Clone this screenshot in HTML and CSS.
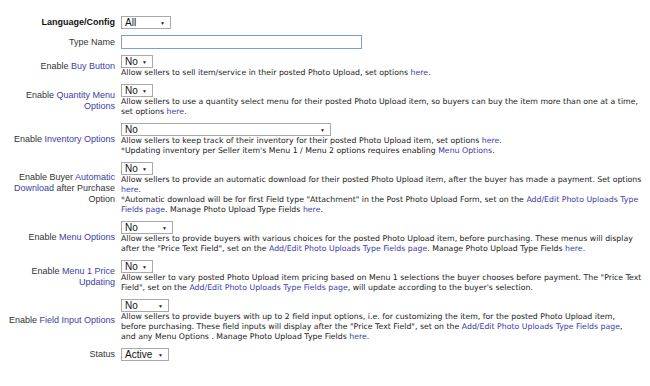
FILE: index.html
```html
<!DOCTYPE html>
<html>
<head>
<meta charset="utf-8">
<link rel="stylesheet" href="styles.css">
</head>
<body>
<table class="form">
  <tr>
    <td class="lbl bold">Language/Config</td>
    <td class="ctl"><div class="sel w50"><span>All</span><i>▼</i></div></td>
  </tr>
  <tr>
    <td class="lbl">Type Name</td>
    <td class="ctl"><div class="txt"></div></td>
  </tr>
  <tr>
    <td class="lbl">Enable <a>Buy Button</a></td>
    <td class="ctl"><div class="sel w32"><span>No</span><i>▼</i></div>
      <div class="desc">Allow sellers to sell item/service in their posted Photo Upload, set options <a>here</a>.</div></td>
  </tr>
  <tr>
    <td class="lbl">Enable <a>Quantity Menu<br>Options</a></td>
    <td class="ctl"><div class="sel w32"><span>No</span><i>▼</i></div>
      <div class="desc">Allow sellers to use a quantity select menu for their posted Photo Upload item, so buyers can buy the item more than one at a time,<br>set options <a>here</a>.</div></td>
  </tr>
  <tr>
    <td class="lbl">Enable <a>Inventory Options</a></td>
    <td class="ctl"><div class="sel w210"><span>No</span><i>▼</i></div>
      <div class="desc">Allow sellers to keep track of their inventory for their posted Photo Upload item, set options <a>here</a>.<br>*Updating inventory per Seller item's Menu 1 / Menu 2 options requires enabling <a>Menu Options</a>.</div></td>
  </tr>
  <tr>
    <td class="lbl">Enable Buyer <a>Automatic<br>Download</a> after Purchase<br>Option</td>
    <td class="ctl"><div class="sel w32"><span>No</span><i>▼</i></div>
      <div class="desc">Allow sellers to provide an automatic download for their posted Photo Upload item, after the buyer has made a payment. Set options<br><a>here</a>.<br>*Automatic download will be for first Field type "Attachment" in the Post Photo Upload Form, set on the <a>Add/Edit Photo Uploads Type<br>Fields page</a>. Manage Photo Upload Type Fields <a>here</a>.</div></td>
  </tr>
  <tr>
    <td class="lbl">Enable <a>Menu Options</a></td>
    <td class="ctl"><div class="sel w52"><span>No</span><i>▼</i></div>
      <div class="desc">Allow sellers to provide buyers with various choices for the posted Photo Upload item, before purchasing. These menus will display<br>after the "Price Text Field", set on the <a>Add/Edit Photo Uploads Type Fields page</a>. Manage Photo Upload Type Fields <a>here</a>.</div></td>
  </tr>
  <tr>
    <td class="lbl">Enable <a>Menu 1 Price<br>Updating</a></td>
    <td class="ctl"><div class="sel w32"><span>No</span><i>▼</i></div>
      <div class="desc">Allow seller to vary posted Photo Upload item pricing based on Menu 1 selections the buyer chooses before payment. The "Price Text<br>Field", set on the <a>Add/Edit Photo Uploads Type Fields page</a>, will update according to the buyer's selection.</div></td>
  </tr>
  <tr>
    <td class="lbl">Enable <a>Field Input Options</a></td>
    <td class="ctl"><div class="sel w48"><span>No</span><i>▼</i></div>
      <div class="desc">Allow sellers to provide buyers with up to 2 field input options, i.e. for customizing the item, for the posted Photo Upload item,<br>before purchasing. These field inputs will display after the "Price Text Field", set on the <a>Add/Edit Photo Uploads Type Fields page</a>,<br>and any Menu Options . Manage Photo Upload Type Fields <a>here</a>.</div></td>
  </tr>
  <tr>
    <td class="lbl">Status</td>
    <td class="ctl"><div class="sel w48"><span>Active</span><i>▼</i></div></td>
  </tr>
</table>
</body>
</html>
```
FILE: styles.css
```css
html, body {
  margin: 0;
  padding: 0;
  background: #fff;
}
.form {
  border-collapse: collapse;
  margin: 13px 0 0 0;
}
.form td {
  padding: 3px 0;
}
.lbl {
  width: 115px;
  text-align: right;
  vertical-align: middle;
  font-family: "Liberation Sans", Arial, sans-serif;
  font-size: 9px;
  line-height: 10.7px;
  color: #333;
  white-space: nowrap;
}
.lbl.bold {
  font-weight: bold;
  color: #111;
}
.ctl {
  padding-left: 6px !important;
  vertical-align: top;
}
a {
  color: #3d3da6;
}
.sel {
  box-sizing: border-box;
  height: 13px;
  border: 1px solid #a9a9a9;
  background: #fff;
  display: flex;
  align-items: center;
  justify-content: space-between;
  padding: 0 5px 0 3px;
  font-family: "Liberation Sans", Arial, sans-serif;
  font-size: 10px;
  color: #111;
}
.sel i {
  font-style: normal;
  font-size: 5px;
  color: #222;
}
.w50 { width: 50px; }
.w32 { width: 32px; }
.w52 { width: 52px; }
.w48 { width: 48px; }
.w210 { width: 210px; }
.txt {
  box-sizing: border-box;
  width: 241px;
  height: 14px;
  border: 1px solid #7d9ed8;
  background: #fff;
}
.desc {
  font-family: "DejaVu Sans", Verdana, sans-serif;
  font-size: 7.8px;
  line-height: 10px;
  color: #222;
  white-space: nowrap;
}
```
